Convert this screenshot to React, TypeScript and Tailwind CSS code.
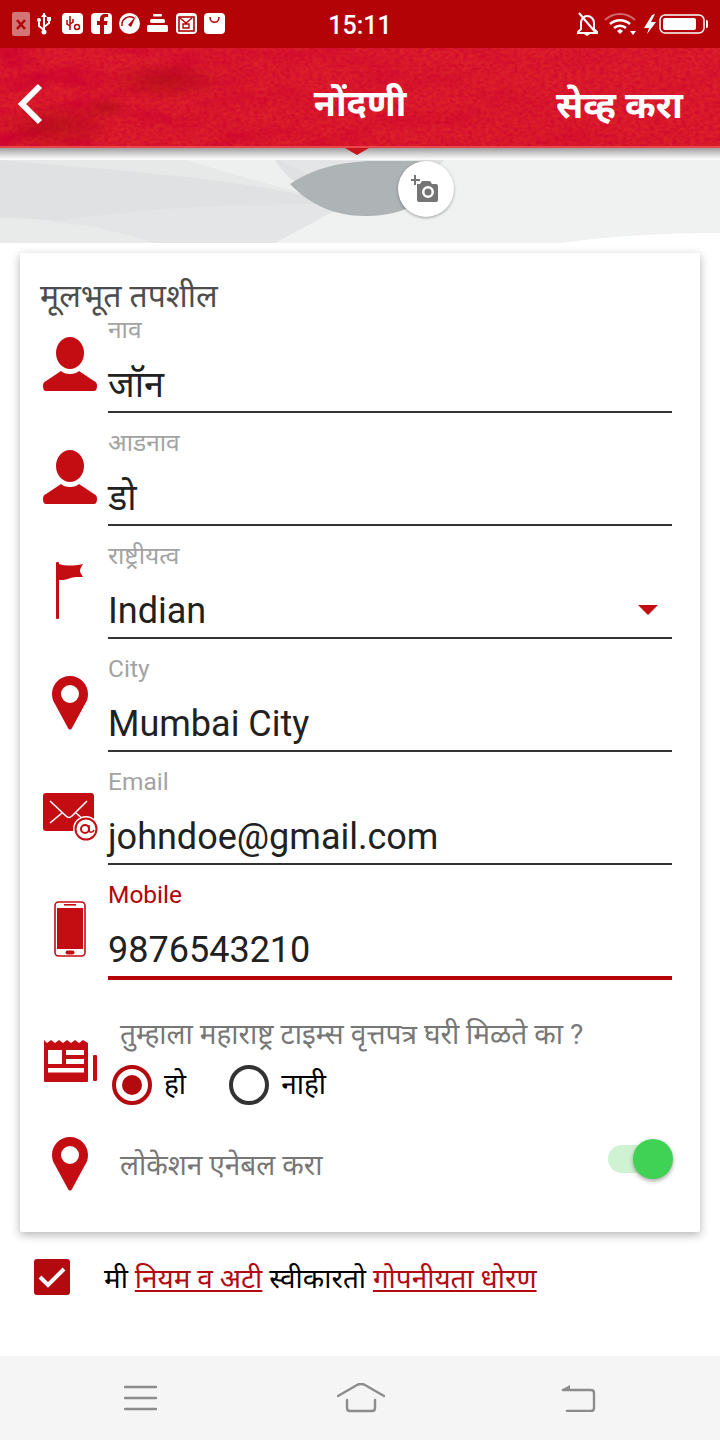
import type { ReactNode } from "react";

const RED = "#c40d12";

function Person() {
  return (
    <svg width="54" height="54" viewBox="0 0 54 54" fill={RED}>
      <ellipse cx="27" cy="16" rx="14" ry="16" />
      <path d="M0 49c0-3 1-4 3-5l15-10c2 2 5 3 9 3s7-1 9-3l15 10c2 1 3 2 3 5 0 3-1 5-3 5H3c-2 0-3-2-3-5z" />
    </svg>
  );
}

function Flag() {
  return (
    <svg className="-mt-[1px]" width="30" height="58" viewBox="0 0 30 58" fill={RED}>
      <rect x="1" y="0" width="3" height="57" rx="1" />
      <path d="M4 2c7 2 14 2 24 0-2 3-3 5-3 7 0 2 2 4 3 6-8 0-10 0-15 2-3 1-6 1-9 1z" />
    </svg>
  );
}

function Pin() {
  return (
    <svg width="36" height="54" viewBox="0 0 36 54" fill={RED}>
      <path
        fillRule="evenodd"
        d="M18 0c10 0 18 8 18 18 0 4-1 7-3 10L20 52c-1 2-3 2-4 0L3 28c-2-3-3-6-3-10C0 8 8 0 18 0zm0 9a9 9 0 1 0 0 18 9 9 0 0 0 0-18z"
      />
    </svg>
  );
}

function Mail() {
  return (
    <svg className="mt-[4px] overflow-visible" width="54" height="50" viewBox="0 0 54 50">
      <rect x="0" y="0" width="51" height="38" rx="3" fill={RED} />
      <path d="M7 8l16 15c2 2 4 2 6 0L44 8M7 30l12-10M33 20l8 7" stroke="#fff" strokeWidth="1.6" fill="none" />
      <circle cx="43" cy="36" r="13" fill="#fff" />
      <circle cx="43" cy="36" r="10.5" fill="none" stroke={RED} strokeWidth="2" />
      <circle cx="42" cy="36" r="4" fill="none" stroke={RED} strokeWidth="2" />
      <path d="M46 32v5c0 3 4 3 5 0" fill="none" stroke={RED} strokeWidth="1.6" />
    </svg>
  );
}

function Phone() {
  return (
    <svg className="-mt-[1px]" width="32" height="56" viewBox="0 0 32 56" fill={RED}>
      <rect x="1" y="1" width="30" height="54" rx="3.5" fill="none" stroke={RED} strokeWidth="1.6" />
      <rect x="3" y="7" width="26" height="41" />
      <rect x="10" y="3" width="12" height="1.6" />
      <rect x="11.5" y="49.5" width="9" height="4" rx="2" />
    </svg>
  );
}

function Paper() {
  return (
    <svg width="54" height="44" viewBox="0 0 54 44" fill={RED}>
      <path d="M0 1l3 3 4-3 4 3 4-3 4 3 4-3 4 3 4-3 4 3 4-3 5 3v38a1 1 0 0 1-1 1H1a1 1 0 0 1-1-1z" />
      <rect x="49" y="16" width="4" height="26" rx="1" />
      <rect x="4" y="11" width="14" height="14" fill="#fff" />
      <rect x="22" y="11" width="18" height="5" fill="#fff" />
      <rect x="22" y="20" width="18" height="5" fill="#fff" />
      <rect x="4" y="29" width="36" height="4.500" fill="#fff" />
    </svg>
  );
}

function Field(props: { icon: ReactNode; label: string; value: string; active?: boolean; select?: boolean }) {
  return (
    <div className={"flex " + (props.active ? "h-[94px]" : "h-[92px]")}>
      <div className="w-[68px] shrink-0 pt-[16px] pr-[8px] flex justify-center items-start">{props.icon}</div>
      <div className={"flex-1 relative " + (props.active ? "border-b-4 border-[#b30306]" : "border-b-2 border-[#333]")}>
        <div className={"-mt-[2px] h-[22px] leading-[22px] text-[24.5px] " + (props.active ? "text-[#b30306]" : "text-[#a3a3a3]")}>{props.label}</div>
        <div className="mt-[20px] h-[48px] leading-[48px] text-[36px] text-[#212121]">{props.value}</div>
        {props.select && (
          <div className="absolute right-[14px] bottom-[22px] w-0 h-0 border-l-[10px] border-r-[10px] border-t-[10px] border-l-transparent border-r-transparent border-t-[#c40d12]" />
        )}
      </div>
    </div>
  );
}

function StatusBar() {
  return (
    <div className="relative h-[48px] bg-[#b30306] flex items-center justify-center text-white">
      <svg className="absolute left-0 top-0" width="240" height="48" viewBox="0 0 240 48">
        <rect x="12" y="12" width="18" height="24" rx="2" fill="#fff" opacity=".45" />
        <path d="M17 20l8 9M25 20l-8 9" stroke="#b30306" strokeWidth="2.6" />
        <path d="M44 13v20M44 30l-5-4v-4M44 27l5-4v-3" stroke="#fff" strokeWidth="2" fill="none" />
        <path d="M41 17l3-4 3 4z" fill="#fff" />
        <circle cx="39" cy="20" r="2" fill="#fff" />
        <rect x="47" y="17" width="4" height="4" fill="#fff" />
        <circle cx="44" cy="32" r="2.500" fill="#fff" />
        <rect x="62" y="13" width="21" height="21" rx="4" fill="#fff" />
        <path d="M70 16v14M67 20v4l3 2M73 19v3l-3 2" stroke="#b30306" strokeWidth="1.500" fill="none" />
        <circle cx="77" cy="27" r="2.500" stroke="#b30306" strokeWidth="1.500" fill="none" />
        <rect x="91" y="13" width="21" height="21" rx="4" fill="#fff" />
        <path d="M104 34v-9h3l.5-4H104v-2c0-1 .5-2 2-2h2v-3h-3c-3 0-5 2-5 5v2h-3v4h3v9z" fill="#b30306" />
        <circle cx="129.500" cy="23.500" r="10.500" fill="#fff" />
        <path d="M122 26a8 8 0 0 1 12-8" stroke="#b30306" strokeWidth="1.500" fill="none" />
        <path d="M128 25l8-9-5 11z" fill="#b30306" />
        <rect x="153" y="14" width="9" height="2.500" rx="1" fill="#fff" />
        <rect x="150" y="19" width="15" height="4" rx="1.500" fill="#fff" />
        <rect x="147" y="25" width="21" height="7" rx="1.500" fill="#fff" />
        <rect x="176" y="13" width="21" height="21" rx="4" fill="#fff" />
        <rect x="179" y="17" width="15" height="14" fill="none" stroke="#b30306" strokeWidth="1.600" />
        <path d="M180 18l6 5 6-5M183 24h6v4h-6z" stroke="#b30306" strokeWidth="1.400" fill="none" />
        <rect x="204" y="13" width="21" height="21" rx="4" fill="#fff" />
        <path d="M210 17c0 7 9 7 9 0" stroke="#b30306" strokeWidth="1.500" fill="none" />
      </svg>
      <span className="pt-[3px] font-medium text-[25px] font-['Roboto',sans-serif]">15:11</span>
      <svg className="absolute left-[570px] top-0" width="150" height="48" viewBox="570 0 150 48">
        <path d="M587 16c4 0 7 3 7 7v6l3 3v1h-19v-1l3-3v-6c0-4 3-7 6-7z" fill="none" stroke="#fff" strokeWidth="2" />
        <path d="M579 13l17 20" stroke="#fff" strokeWidth="2" />
        <path d="M584 34h6l-3 2z" fill="#fff" />
        <path d="M605 20a22 22 0 0 1 30 0" stroke="#fff" strokeWidth="2" opacity=".4" fill="none" />
        <path d="M610 24a15 15 0 0 1 20 0M614 28a9 9 0 0 1 12 0" stroke="#fff" strokeWidth="2.400" fill="none" />
        <path d="M617 31l3-2 3 2-3 3z" fill="#fff" />
        <path d="M630 31h6l-3 4z" fill="#fff" />
        <path d="M652 15l-8 13h5l-2 6 9-12h-5l4-8z" fill="#fff" />
        <rect x="660" y="15" width="44" height="18" rx="5" fill="none" stroke="#fff" strokeWidth="1.500" />
        <rect x="663" y="18" width="33" height="12" rx="2" fill="#fff" />
        <path d="M706 20c2 0 2 1 2 4s0 4-2 4z" fill="#fff" />
      </svg>
    </div>
  );
}

function Header() {
  return (
    <div className="relative h-[100px] bg-[#dc2029] flex items-center justify-center pt-[12px] text-white overflow-hidden">
      <svg className="absolute inset-0" width="720" height="100">
        <defs>
          <filter id="grain" x="0" y="0" width="100%" height="100%">
            <feTurbulence type="fractalNoise" baseFrequency="0.22 0.3" numOctaves="3" seed="4" />
            <feColorMatrix values="0 0 0 0 0.62  0 0 0 0 0  0 0 0 0 0.03  1.400 0 0 0 -0.45" />
          </filter>
          <filter id="blotch" x="0" y="0" width="100%" height="100%">
            <feTurbulence type="fractalNoise" baseFrequency="0.02 0.05" numOctaves="3" seed="11" />
            <feColorMatrix values="0 0 0 0 0.6  0 0 0 0 0  0 0 0 0 0.03  2.200 0 0 0 -0.95" />
          </filter>
          <radialGradient id="dark">
            <stop offset="0" stopColor="#a50a10" stopOpacity=".55" />
            <stop offset="1" stopColor="#a50a10" stopOpacity="0" />
          </radialGradient>
          <linearGradient id="fade">
            <stop offset="0" stopColor="#fff" />
            <stop offset=".45" stopColor="#fff" stopOpacity=".5" />
            <stop offset="1" stopColor="#fff" stopOpacity=".15" />
          </linearGradient>
          <mask id="left">
            <rect width="720" height="100" fill="url(#fade)" />
          </mask>
        </defs>
        <rect width="720" height="100" filter="url(#grain)" />
        <g mask="url(#left)">
          <rect width="720" height="100" filter="url(#blotch)" />
        </g>
        <ellipse cx="165" cy="33" rx="60" ry="20" fill="url(#dark)" />
        <ellipse cx="55" cy="78" rx="60" ry="24" fill="url(#dark)" />
        <ellipse cx="105" cy="60" rx="24" ry="12" fill="url(#dark)" />
        <rect y="98" width="720" height="2" fill="#e8474c" />
      </svg>
      <svg className="absolute left-[14px] top-[34px]" width="32" height="44" viewBox="0 0 32 44">
        <path d="M26 4L8 22l18 18" stroke="#fff" strokeWidth="6" fill="none" />
      </svg>
      <span className="relative leading-[48px] text-[36px] font-bold">नोंदणी</span>
      <span className="absolute right-[37px] top-[34px] leading-[48px] text-[37px] font-bold">सेव्ह करा</span>
    </div>
  );
}

function Hero() {
  return (
    <div className="relative h-[95px]">
      <div className="h-[12px] bg-gradient-to-b from-[#9e9e9e] via-[#d4d4d4] to-white" />
      <div className="absolute left-[345px] top-0 w-0 h-0 border-l-[12px] border-r-[12px] border-t-[7px] border-l-transparent border-r-transparent border-t-[#c8141c]" />
      <svg className="block" width="720" height="83" viewBox="0 160 720 83">
        <rect x="0" y="160" width="720" height="83" fill="#dfe1e2" />
        <path d="M0 160h185c60 18 110 30 160 45C250 178 110 170 0 160z" fill="#e7e9e9" />
        <path d="M185 160h90c14 24 35 32 70 45-50-14-100-27-160-45z" fill="#eef0f0" />
        <path d="M278 160h142v40h-60z" fill="#e3e5e6" />
        <path d="M0 218c60 0 110 10 155 25H0z" fill="#e9ebeb" />
        <path d="M50 222c90-14 200-20 295-17l-70 38H155c-30-12-65-18-105-21z" fill="#e3e5e6" />
        <path d="M345 205l75-45h300v83H275z" fill="#f0f1f1" />
        <path d="M420 160h24l-8 10h-16z" fill="#dfe1e2" />
        <path d="M560 243c60-8 110-10 160-10v10z" fill="#ffffff" />
        <path d="M290 184c20-14 50-23 85-23h49v38c-15 10-30 17-60 17-30 0-55-12-74-32z" fill="#aeb3b6" />
      </svg>
      <div className="absolute left-[398px] top-[13px] w-[56px] h-[56px] rounded-full bg-white shadow-[0_1px_3px_rgba(0,0,0,0.35)] flex items-center justify-center">
        <svg width="30" height="28" viewBox="0 0 30 28" fill="#757575">
          <path d="M3 0h2v4h4v2H5v4H3V6h-4V4h4z" />
          <path fillRule="evenodd" d="M6 9h3l2-3h8l2 3h4a2 2 0 0 1 2 2v14a2 2 0 0 1-2 2H8a2 2 0 0 1-2-2zm11 2a6 6 0 1 0 0 12 6 6 0 0 0 0-12zm0 2.500a3.500 3.500 0 1 1 0 7 3.500 3.500 0 0 1 0-7z" />
        </svg>
      </div>
    </div>
  );
}

function Radio(props: { label: string; on?: boolean }) {
  return (
    <div className="flex items-center gap-[12px]">
      <div className={"w-[40px] h-[40px] rounded-full border-4 flex items-center justify-center " + (props.on ? "border-[#b30a10]" : "border-[#333]")}>
        {props.on && <div className="w-[20px] h-[20px] rounded-full bg-[#b30a10]" />}
      </div>
      <span className="text-[28px] leading-[42px] text-black">{props.label}</span>
    </div>
  );
}

export default function App() {
  return (
    <div className="w-[720px] h-[1440px] bg-white flex flex-col font-['Roboto','Noto_Sans',sans-serif]">
      <StatusBar />
      <Header />
      <Hero />

      <div className="mx-[20px] mt-[10px] h-[979px] bg-white rounded-[2px] shadow-[0_3px_10px_rgba(0,0,0,0.3)] pt-[24px] pl-[20px] pr-[28px]">
        <div className="h-[38px] leading-[38px] text-[32px] text-[#4d4d4d] mb-[6px]">मूलभूत तपशील</div>
        <div className="flex flex-col gap-[21px]">
          <Field icon={<Person />} label="नाव" value="जॉन" />
          <Field icon={<Person />} label="आडनाव" value="डो" />
          <Field icon={<Flag />} label="राष्ट्रीयत्व" value="Indian" select />
          <Field icon={<Pin />} label="City" value="Mumbai City" />
          <Field icon={<Mail />} label="Email" value="johndoe@gmail.com" />
          <Field icon={<Phone />} label="Mobile" value="9876543210" active />
        </div>

        <div className="flex mt-[37px]">
          <div className="w-[80px] shrink-0 pt-[22px] pl-[4px]">
            <Paper />
          </div>
          <div>
            <div className="h-[36px] leading-[36px] text-[28px] text-[#777]">तुम्हाला महाराष्ट्र टाइम्स वृत्तपत्र घरी मिळते का ?</div>
            <div className="flex gap-[43px] mt-[11px] -ml-[8px]">
              <Radio label="हो" on />
              <Radio label="नाही" />
            </div>
          </div>
        </div>

        <div className="flex items-center mt-[31px]">
          <div className="w-[80px] shrink-0 pl-[12px]">
            <Pin />
          </div>
          <div className="flex-1 h-[40px] leading-[40px] text-[28px] text-[#777] mt-[4px]">लोकेशन एनेबल करा</div>
          <div className="relative w-[65px] h-[40px] -mt-[11px] -mr-[1px] flex items-center">
            <div className="w-[62px] h-[28px] rounded-full bg-[#cff3d2]" />
            <div className="absolute right-0 top-0 w-[40px] h-[40px] rounded-full bg-[#40d254] shadow-[0_2px_4px_rgba(0,0,0,0.35)]" />
          </div>
        </div>
      </div>

      <div className="flex items-center mt-[27px] pl-[34px]">
        <div className="w-[36px] h-[36px] rounded-[3px] bg-[#b30a10] flex items-center justify-center">
          <svg width="30" height="24" viewBox="0 0 30 24">
            <path d="M3 12l8 8L27 4" stroke="#fff" strokeWidth="4" fill="none" />
          </svg>
        </div>
        <p className="ml-[34px] h-[36px] leading-[40px] text-[27.9px] text-black">
          मी <span className="text-[#b30a10] underline">नियम व अटी</span> स्वीकारतो <span className="text-[#b30a10] underline">गोपनीयता धोरण</span>
        </p>
      </div>

      <div className="mt-auto h-[84px] bg-[#f5f5f5] flex items-center justify-between px-[124px]">
        <svg width="34" height="26" viewBox="0 0 34 26" stroke="#8c8c8c" strokeWidth="2.400" strokeLinecap="round">
          <path d="M1 2h31M1 13h31M1 24h31" />
        </svg>
        <svg className="ml-[3px]" width="48" height="30" viewBox="0 0 48 30" fill="none" stroke="#8c8c8c" strokeWidth="2.400" strokeLinecap="round">
          <path d="M1 13L20 2c3-1.500 5-1.500 8 0l19 11" />
          <path d="M10 17v8c0 2 1 3 3 3h22c2 0 3-1 3-3v-8" />
        </svg>
        <svg width="36" height="28" viewBox="0 0 36 28" fill="none" stroke="#8c8c8c" strokeWidth="2.400" strokeLinecap="round">
          <path d="M3 6h28c2 0 3 1 3 3v15c0 2-1 3-3 3H7" />
          <path d="M1 6l9-5v5z" fill="#8c8c8c" stroke="none" />
        </svg>
      </div>
    </div>
  );
}
